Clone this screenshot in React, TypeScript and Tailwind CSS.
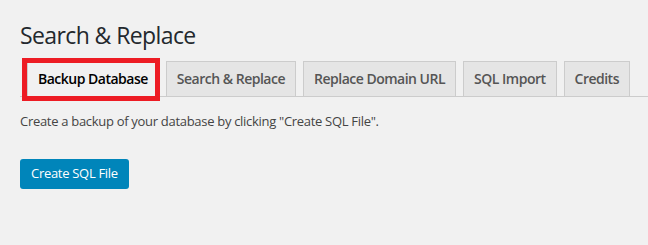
const tabs = ["Backup Database", "Search & Replace", "Replace Domain URL", "SQL Import", "Credits"];

export default function App() {
  const active = 0;

  return (
    <div className="min-h-screen bg-[#f1f1f1] pl-5 font-['Open_Sans','Noto_Sans',sans-serif]">
      <h1 className="pt-5 text-[23px] leading-[30px] font-normal tracking-[-0.6px] text-[#23282d]">Search &amp; Replace</h1>

      <nav className="mt-[11px] flex items-end border-b border-[#ccc] whitespace-nowrap">
        {tabs.map((t, i) =>
          i === active ? (
            <a key={t} className="relative -mb-px ml-[7px] shrink-0 border border-b-0 border-[#ccc] bg-[#f1f1f1] px-[10px] py-[5px] pb-[6px] text-[14px] leading-6 font-semibold tracking-[-0.5px] text-black">
              {t}
              <span className="absolute -top-[4px] -right-[2px] -bottom-[4px] -left-[6px] border-[5px] border-[#ed1c24]" />
            </a>
          ) : (
            <a key={t} className="ml-[7px] shrink-0 border border-b-0 border-[#ccc] bg-[#e5e5e5] px-[10px] py-[5px] text-[14px] leading-6 font-semibold tracking-[-0.5px] text-[#555]">
              {t}
            </a>
          )
        )}
      </nav>

      <p className="mt-[14px] text-[13px] leading-5 tracking-[-0.3px] text-[#444]">
        Create a backup of your database by clicking "Create SQL File".
      </p>

      <button className="mt-[28px] h-[30px] rounded-[3px] bg-[#0085ba] px-[11px] text-[13px] tracking-[-0.3px] text-white">
        Create SQL File
      </button>
    </div>
  );
}
